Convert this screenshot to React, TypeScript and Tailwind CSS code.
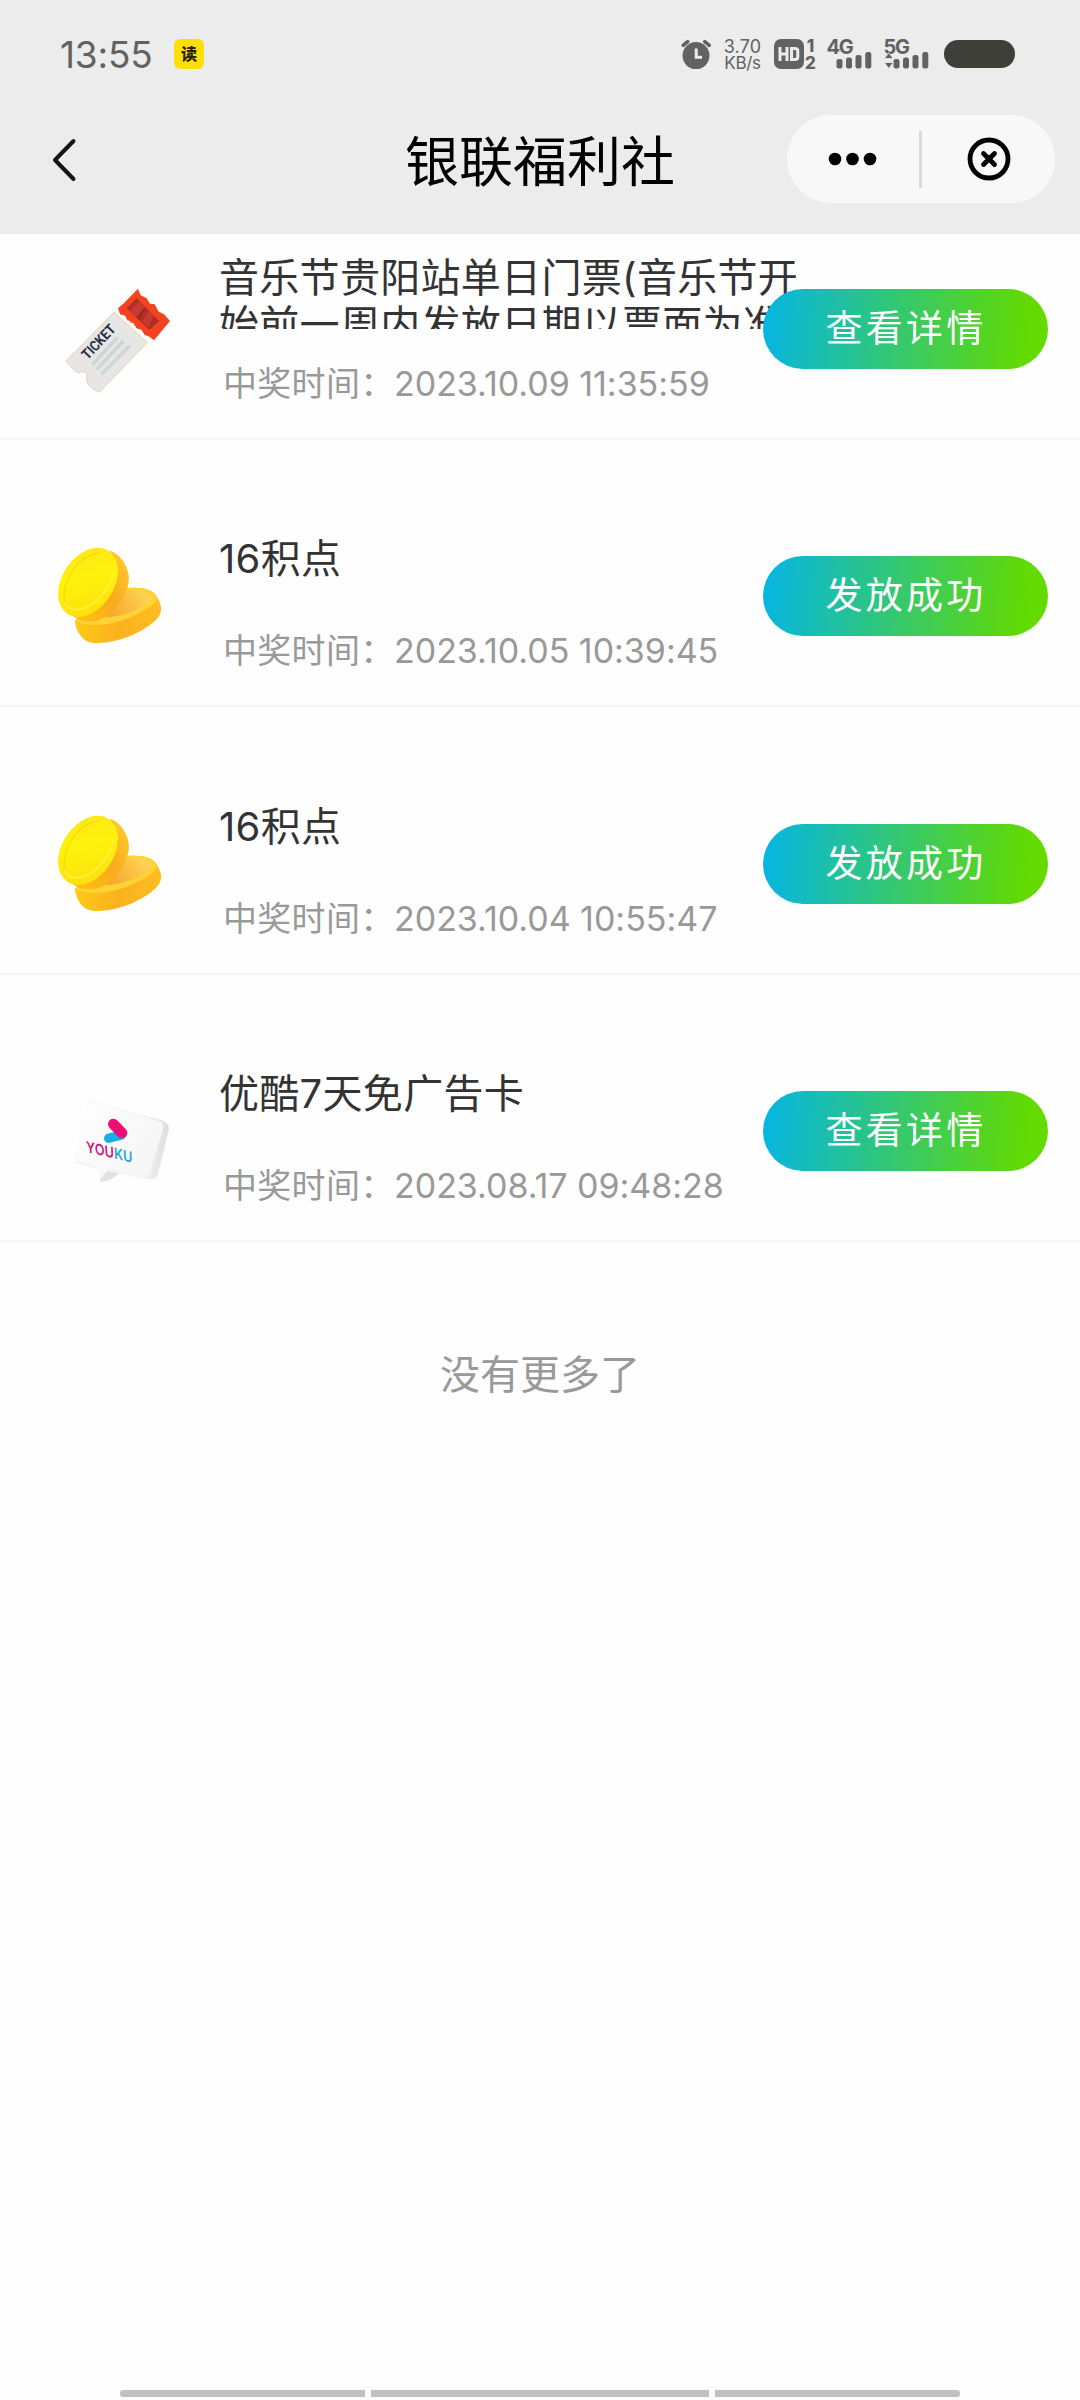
import React from "react";

const FONT = "font-['Inter','Noto_Sans_CJK_SC',sans-serif]";

function TicketIcon() {
  return (
    <svg width="160" height="160" viewBox="0 -24 480 480">
      <path d="M222 154 L322 244 L178 394 Q160 388 145 370 Q138 362 139 350 Q146 342 136 334 Q126 326 116 336 Q100 328 78 300 Z" fill="#e9e7e4" stroke="#e3d3a4" strokeWidth="3" strokeLinejoin="round" />
      <path d="M222 160 L314 244 L178 386 L150 360 Q152 340 138 328 Q128 324 116 330 L86 300 Z" fill="#e8e6e4" />
      <path d="M294 83 L302 103 L320 112 L330 128 L344 130 L356 152 L372 160 L390 180 L342 238 L326 226 L314 222 L304 206 L288 202 L280 186 L264 182 L256 166 L240 160 L234 142 L250 128 Z" fill="#f4441f" />
      <path d="M290 112 L358 180 L328 206 L260 142 Z" fill="#b02c26" />
      <path d="M298 120 L316 138 L288 168 L268 150 Z M326 148 L342 163 L326 198 L306 182 Z" fill="#c63a31" />
      <path d="M312 144 L294 174" stroke="#8f211e" strokeWidth="4" />
      <path d="M233 156 L244 165 L252 164 L259 180 L268 181 L275 197 L288 198 L296 216 L308 217 L317 236" fill="none" stroke="#fff" strokeWidth="4" strokeDasharray="9 5" />
      <g stroke="#cdd6d6" strokeWidth="10">
        <path d="M158 310 L232 230" />
        <path d="M170 325 L250 240" />
        <path d="M184 340 L270 254" />
      </g>
      <text transform="translate(143 298) rotate(-46.5)" fontFamily="Roboto" fontWeight="700" fontSize="43" textLength="126" lengthAdjust="spacingAndGlyphs" fill="#26324a">TICKET</text>
    </svg>
  );
}

function CoinsIcon({ id }: { id: string }) {
  return (
    <svg width="160" height="160" viewBox="0 0 480 480">
      <defs>
        <linearGradient id={`${id}-face`} x1="0" y1="0" x2="0.7" y2="1">
          <stop offset="0" stopColor="#ffe21a" />
          <stop offset="0.5" stopColor="#fff20c" />
          <stop offset="1" stopColor="#ffe00c" />
        </linearGradient>
        <linearGradient id={`${id}-side`} x1="1" y1="0" x2="0" y2="1">
          <stop offset="0" stopColor="#ffd02c" />
          <stop offset="0.5" stopColor="#f9aa1d" />
          <stop offset="1" stopColor="#ffc40d" />
        </linearGradient>
        <linearGradient id={`${id}-low`} x1="0" y1="0" x2="1" y2="0">
          <stop offset="0" stopColor="#ffca14" />
          <stop offset="0.5" stopColor="#fbb11f" />
          <stop offset="1" stopColor="#ffbd22" />
        </linearGradient>
        <linearGradient id={`${id}-dish`} x1="0" y1="0.6" x2="1" y2="0.2">
          <stop offset="0" stopColor="#f5a92c" />
          <stop offset="1" stopColor="#ffd65a" />
        </linearGradient>
      </defs>
      <path d="M104 302 C110 342 132 368 164 369 C230 372 310 338 350 298 C368 276 366 258 354 236 C342 208 310 200 264 204 Z" fill={`url(#${id}-low)`} />
      <path d="M104 302 C160 330 250 306 300 278 C330 262 350 248 352 234 C338 206 304 200 264 204 L200 290 Z" fill="#ffd235" />
      <path d="M196 292 C262 288 316 262 334 238 C326 214 300 208 262 212 Z" fill={`url(#${id}-dish)`} />
      <path d="M100 288 C116 306 156 310 186 296 C236 270 272 210 266 166 C262 134 242 106 212 92 Z" fill={`url(#${id}-side)`} />
      <ellipse cx="144" cy="187" rx="78" ry="113" transform="rotate(33 144 187)" fill={`url(#${id}-face)`} />
      <path d="M73 246 C66 180 110 110 176 98" fill="none" stroke="#efcf08" strokeWidth="4" opacity="0.6" />
      <path d="M72 248 C92 282 140 272 176 236 C198 214 214 188 220 162" fill="none" stroke="#fff34a" strokeWidth="5" opacity="0.8" />
    </svg>
  );
}

function YoukuIcon() {
  return (
    <svg width="160" height="160" viewBox="-60 -48 480 480">
      <defs>
        <linearGradient id="card-side" x1="0" y1="0" x2="1" y2="0">
          <stop offset="0.7" stopColor="#f4f4f4" />
          <stop offset="1" stopColor="#dedede" />
        </linearGradient>
        <linearGradient id="card-face" x1="0" y1="0" x2="1" y2="0.6">
          <stop offset="0" stopColor="#fefefe" />
          <stop offset="1" stopColor="#f6f6f6" />
        </linearGradient>
      </defs>
      <path d="M120 328 Q118 334 130 332 Q146 330 154 324 L182 304 L122 290 Z" fill="#e2e2e2" />
      <path d="M84 87 L306 148 Q330 156 326 178 L294 308 Q288 326 266 325 L120 296 L46 276 Z" fill="url(#card-side)" />
      <path d="M84 89 L296 150 Q314 157 308 178 L270 304 Q264 322 246 319 L146 294 L118 328 L112 286 L54 270 Q40 266 44 250 Z" fill="url(#card-face)" />
      <path d="M146 202 L184 192" stroke="#19aee8" strokeWidth="28" strokeLinecap="round" />
      <path d="M160 159 L186 186" stroke="#ef0d78" strokeWidth="32" strokeLinecap="round" />
      <g transform="matrix(1 0.235 0.04 1 79 243)" fontFamily="Inter" fontWeight="600" fontSize="46">
        <text x="0" y="0" textLength="83" lengthAdjust="spacingAndGlyphs" fill="#d31479">YOU</text>
        <text x="84" y="0" textLength="55" lengthAdjust="spacingAndGlyphs" fill="#25a9d2">KU</text>
      </g>
    </svg>
  );
}

function SignalBars({ arrows = false }: { arrows?: boolean }) {
  return (
    <svg width="46" height="32" viewBox="0 0 46 32" className="absolute left-0 top-0" fill="#626262">
      <rect x="9.5" y="21" width="6" height="9.5" rx="2.2" />
      <rect x="19" y="19.5" width="6" height="11" rx="2.2" />
      <rect x="28.5" y="17" width="6" height="13.5" rx="2.2" />
      <rect x="38.3" y="14" width="6" height="16.5" rx="2.2" />
      {arrows && <path d="M0.3 20.5 L4.8 14.8 L9.2 20.5 Z M0.3 24.5 L4.8 30.5 L9.2 24.5 Z" stroke="#ececec" strokeWidth="0.8" />}
    </svg>
  );
}

function StatusBar() {
  return (
    <div className="flex h-[108px] items-start pl-[60px] pt-[38px] text-[#626262]">
      <span className="w-[114px] text-[37px] font-normal leading-[34px] tracking-[-0.2px]">13:55</span>
      <span className="mt-[0.5px] flex h-[30px] w-[30px] items-center justify-center rounded-[6px] bg-[#fddf08] text-[16px] font-black text-[#2b2506]">读</span>
      <svg className="ml-[477px]" width="31" height="33" viewBox="0 0 31 33" fill="none">
        <circle cx="15" cy="17.6" r="13.5" fill="#626262" />
        <path d="M2.2 7.4 L6.6 3.7 M23.8 3.7 L28.2 7.4" stroke="#626262" strokeWidth="3.6" strokeLinecap="round" />
        <path d="M15.2 10.5 V19.2 H21" stroke="#ececec" strokeWidth="3" />
      </svg>
      <span className="ml-[11.5px] flex w-[38px] flex-col items-center whitespace-nowrap text-[18px] leading-[17px]">
        <span className="tracking-[0.2px]">3.70</span>
        <span className="text-[17px] tracking-[-0.3px]">KB/s</span>
      </span>
      <span className="ml-[12px] mt-[1px] flex h-[30px] w-[30px] items-center justify-center rounded-[7px] bg-[#626262]">
        <svg width="22" height="14" viewBox="0 0 22 14" fill="none" stroke="#ececec" strokeWidth="3">
          <path d="M2 0 V14 M9 0 V14 M2 7 H9 M13.5 1.5 H17 Q19.8 1.5 19.8 4 V10 Q19.8 12.5 17 12.5 H13.5 Z" />
        </svg>
      </span>
      <span className="ml-[1px] flex w-[12px] flex-col items-center text-[17px] font-extrabold leading-[17px]">
        <span>1</span>
        <span>2</span>
      </span>
      <span className="relative ml-[10px] h-[32px] w-[57px]">
        <span className="block text-[20px] font-bold leading-[18px] tracking-[-1.2px]">4G</span>
        <SignalBars />
      </span>
      <span className="relative h-[32px] w-[60px]">
        <span className="block text-[20px] font-bold leading-[18px] tracking-[-1.2px]">5G</span>
        <SignalBars arrows />
      </span>
      <span className="mt-[2px] h-[28px] w-[71px] rounded-full bg-[#3f3f39]" />
    </div>
  );
}

function NavBar() {
  return (
    <div className="grid h-[126px] grid-cols-[320px_440px_320px]">
      <div className="pl-[49px] pt-[29px]">
        <svg width="30" height="46" viewBox="0 0 30 46" fill="none" stroke="#151515" strokeWidth="4" strokeLinecap="round" strokeLinejoin="round">
          <path d="M24.5 4 L6 23 L24.5 42" />
        </svg>
      </div>
      <h1 className="pt-[22px] text-center text-[54px] font-normal leading-[66px] text-black">银联福利社</h1>
      <div className="ml-[27px] mt-[7px] flex h-[88px] w-[268px] items-center rounded-full bg-[#f8f8f8]">
        <svg width="132" height="20" viewBox="0 0 132 20">
          <circle cx="48" cy="10" r="6.3" />
          <circle cx="65.5" cy="10" r="6.3" />
          <circle cx="83" cy="10" r="6.3" />
        </svg>
        <div className="h-[57px] w-[3px] bg-[#d9d9d9]" />
        <svg width="133" height="48" viewBox="0 0 133 48" fill="none" stroke="#000" strokeWidth="4.8">
          <circle cx="67" cy="24" r="19" />
          <path d="M61.5 18.5 L72.5 29.5 M72.5 18.5 L61.5 29.5" strokeLinecap="round" />
        </svg>
      </div>
    </div>
  );
}

type Prize = { title: string; time: string; action: string; icon: React.ReactNode; size: string };

const prizes: Prize[] = [
  {
    title: "音乐节贵阳站单日门票(音乐节开始前一周内发放日期以票面为准)",
    time: "2023.10.09 11:35:59",
    action: "查看详情",
    icon: <TicketIcon />,
    size: "h-[206px]",
  },
  { title: "16积点", time: "2023.10.05 10:39:45", action: "发放成功", icon: <CoinsIcon id="a" />, size: "h-[267px]" },
  { title: "16积点", time: "2023.10.04 10:55:47", action: "发放成功", icon: <CoinsIcon id="b" />, size: "h-[268px]" },
  { title: "优酷7天免广告卡", time: "2023.08.17 09:48:28", action: "查看详情", icon: <YoukuIcon />, size: "h-[267px]" },
];

function PrizeRow({ prize }: { prize: Prize }) {
  return (
    <li className={`flex items-end border-b-2 border-[#f5f5f5] ${prize.size}`}>
      <div className="mb-[25px] ml-[40px] w-[179px] shrink-0">{prize.icon}</div>
      <div className="w-[587px] shrink-0 pb-[31px]">
        <div className="flex h-[74px] overflow-hidden text-[40px] leading-[46.5px] tracking-[0.3px] text-[#333] [align-items:safe_center]">
          <p>{prize.title}</p>
        </div>
        <div className="mt-[32px] flex h-[46px] items-center whitespace-nowrap pl-[4px] text-[34px] leading-[46px] text-[#999]">
          <span className="w-[171px] tracking-[0.3px]">中奖时间：</span>
          <span className="tracking-[-0.02px]">{prize.time}</span>
        </div>
      </div>
      <button className="relative z-10 -ml-[43px] mb-[69px] h-[80px] w-[285px] shrink-0 rounded-full bg-[linear-gradient(95deg,#06b6e0_2%,#63da00_92%)] pl-[1px] text-[37px] leading-[78px] tracking-[3.2px] text-white">
        {prize.action}
      </button>
    </li>
  );
}

export default function App() {
  return (
    <div className={`flex h-[2400px] w-[1080px] flex-col overflow-hidden bg-[#fefefe] ${FONT}`}>
      <header className="h-[234px] shrink-0 bg-[#ececec]">
        <StatusBar />
        <NavBar />
      </header>
      <ul>
        {prizes.map((prize) => (
          <PrizeRow key={prize.time} prize={prize} />
        ))}
      </ul>
      <p className="mt-[103px] text-center text-[40px] leading-[60px] text-[#999]">没有更多了</p>
      <div className="mb-[3px] mt-auto flex h-[7px] justify-center gap-[6px]">
        <span className="w-[245px] rounded-l-[3px] bg-[#c1c1c1]" />
        <span className="w-[338px] bg-[#c1c1c1]" />
        <span className="w-[245px] rounded-r-[3px] bg-[#c1c1c1]" />
      </div>
    </div>
  );
}
